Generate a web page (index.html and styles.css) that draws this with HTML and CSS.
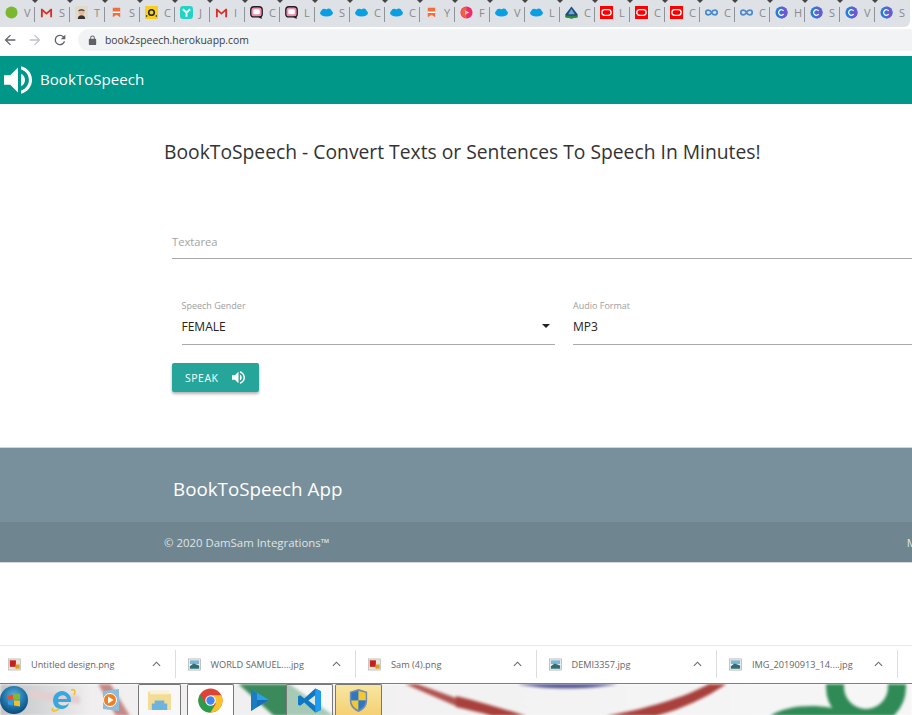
FILE: index.html
```html
<!DOCTYPE html>
<html lang="en">
<head>
    <meta charset="UTF-8">
    <meta name="viewport" content="width=device-width, initial-scale=1.0">
    <title>BookToSpeech</title>
    <link rel="stylesheet" href="styles.css">
</head>
<body>
<svg class="sprites" width="0" height="0">
    <defs><radialGradient id="orb-glow" cx=".5" cy=".35" r=".7"><stop offset="0" stop-color="#5fb4e0"/><stop offset=".6" stop-color="#1c6ea4"/><stop offset="1" stop-color="#0c3f68"/></radialGradient></defs>
    <symbol id="dot" viewBox="0 0 14 14"><circle cx="7" cy="7" r="6.500" fill="#7cb82f"/></symbol>
    <symbol id="gmail" viewBox="0 0 14 14"><path d="M1 12V3h1.500L7 7l4.500-4H13v9h-2V6L7 9.500 3 6v6z" fill="#d93025"/></symbol>
    <symbol id="face" viewBox="0 0 14 14"><rect width="14" height="14" fill="#e3d9c8"/><path d="M3 14c0-3 2-4 4-4s4 1 4 4z" fill="#333"/><circle cx="7" cy="6.500" r="3.200" fill="#e5b995"/><path d="M3.500 6C3.500 2.500 10.500 2.500 10.500 6 9 4.500 5 4.500 3.500 6z" fill="#222"/></symbol>
    <symbol id="mark" viewBox="0 0 14 14"><path d="M3 2h8v10L7 9.500 3 12z" fill="#ee6f3c"/><rect x="3" y="6" width="8" height="1.500" fill="#fff"/></symbol>
    <symbol id="zero" viewBox="0 0 14 14"><rect width="14" height="14" fill="#f7cf1e"/><circle cx="7" cy="7" r="3" fill="none" stroke="#222" stroke-width="1.600"/><rect x="1" y="10" width="1.500" height="1.500" fill="#222"/><rect x="11.500" y="10" width="1.500" height="1.500" fill="#222"/></symbol>
    <symbol id="teal" viewBox="0 0 14 14"><rect width="14" height="14" rx="3.500" fill="#22d3c5"/><path d="M3 3.500 7 7l4-3.500M7 7v4.500" fill="none" stroke="#fff" stroke-width="2"/></symbol>
    <symbol id="bubble" viewBox="0 0 14 14"><rect x=".8" y=".8" width="12.400" height="11" rx="3.500" fill="#ee8fad" stroke="#1e1e22" stroke-width="1.400"/><rect x="3.500" y="3.500" width="7" height="5.500" rx="1.500" fill="#fff"/><path d="M8.500 11.500 12.500 14v-3z" fill="#1e1e22"/></symbol>
    <symbol id="cloud" viewBox="0 0 14 14"><ellipse cx="7" cy="7.500" rx="7" ry="3.800" fill="#0a9fe3"/><circle cx="4.500" cy="6" r="3" fill="#0a9fe3"/><circle cx="9.500" cy="5.500" r="2.800" fill="#0a9fe3"/></symbol>
    <symbol id="play" viewBox="0 0 14 14"><circle cx="7" cy="7" r="6.500" fill="#ee2a6b"/><path d="M1 7a6 6 0 0 1 6-6v12a6 6 0 0 1-6-6z" fill="#f0613f"/><path d="M5.500 4.500 10 7l-4.500 2.500z" fill="#fbd"/></symbol>
    <symbol id="trail" viewBox="0 0 14 14"><path d="M7 .5 13.500 9v3L7 13.500.5 12V9z" fill="#1f4e79"/><path d="M7 3l3.500 6h-7z" fill="#6fa8dc"/><path d="M.5 10.500h13V12L7 13.500.5 12z" fill="#2e8b3d"/></symbol>
    <symbol id="oracle" viewBox="0 0 14 14"><rect width="14" height="14" fill="#f00"/><rect x="2" y="4" width="10" height="6" rx="3" fill="none" stroke="#fff" stroke-width="1.400"/></symbol>
    <symbol id="loop" viewBox="0 0 14 14"><path d="M7 7C5.500 3.500.8 3.800.8 7s4.700 3.500 6.200 0 6.200-3.200 6.200 0-4.700 3.500-6.200 0z" fill="none" stroke="#4a8bd0" stroke-width="2"/></symbol>
    <symbol id="coin" viewBox="0 0 14 14"><circle cx="7" cy="7" r="6.500" fill="#2f7ad8"/><path d="M7 .5a6.500 6.500 0 0 1 0 13z" fill="#6a5bd0"/><path d="M9.300 5.200a3 3 0 1 0 0 3.600" fill="none" stroke="#fff" stroke-width="1.300"/></symbol>
    <symbol id="sound" viewBox="3 3 18 18"><path d="M3 9v6h4l5 5V4L7 9H3zm13.500 3c0-1.770-1.020-3.290-2.500-4.030v8.050c1.480-.73 2.500-2.250 2.500-4.020zM14 3.230v2.060c2.890.86 5 3.540 5 6.710s-2.110 5.850-5 6.710v2.060c4.010-.91 7-4.490 7-8.770s-2.990-7.860-7-8.770z" fill="currentColor"/></symbol>
    <symbol id="chev" viewBox="0 0 10 6"><path d="M1 5l4-4 4 4" fill="none" stroke="#666" stroke-width="1.200"/></symbol>
    <symbol id="pngfile" viewBox="0 0 14 14"><rect x=".5" y="1" width="13" height="12" fill="#e8e2d8" stroke="#aaa" stroke-width=".6"/><rect x="2" y="2.500" width="6.500" height="7" fill="#c4201c"/><rect x="8" y="7" width="4.500" height="4.500" fill="#d9a020"/></symbol>
    <symbol id="jpgfile" viewBox="0 0 14 14"><rect x=".5" y="1" width="13" height="12" fill="#eef1f3" stroke="#999" stroke-width=".6"/><rect x="2" y="2.500" width="10" height="4" fill="#7fb6d8"/><path d="M2 9l4-3 6 2v3.500H2z" fill="#2f6f73"/></symbol>
</svg>

<div class="tabstrip">
    <div class="tab"><svg class="fav"><use href="#dot"/></svg><span>V</span></div>
    <div class="tab"><svg class="fav"><use href="#gmail"/></svg><span>S</span></div>
    <div class="tab"><svg class="fav"><use href="#face"/></svg><span>T</span></div>
    <div class="tab"><svg class="fav"><use href="#mark"/></svg><span>S</span></div>
    <div class="tab"><svg class="fav"><use href="#zero"/></svg><span>C</span></div>
    <div class="tab"><svg class="fav"><use href="#teal"/></svg><span>J</span></div>
    <div class="tab"><svg class="fav"><use href="#gmail"/></svg><span>I</span></div>
    <div class="tab"><svg class="fav"><use href="#bubble"/></svg><span>C</span></div>
    <div class="tab"><svg class="fav"><use href="#bubble"/></svg><span>L</span></div>
    <div class="tab"><svg class="fav"><use href="#cloud"/></svg><span>S</span></div>
    <div class="tab"><svg class="fav"><use href="#cloud"/></svg><span>C</span></div>
    <div class="tab"><svg class="fav"><use href="#cloud"/></svg><span>C</span></div>
    <div class="tab"><svg class="fav"><use href="#mark"/></svg><span>Y</span></div>
    <div class="tab"><svg class="fav"><use href="#play"/></svg><span>F</span></div>
    <div class="tab"><svg class="fav"><use href="#cloud"/></svg><span>V</span></div>
    <div class="tab"><svg class="fav"><use href="#cloud"/></svg><span>L</span></div>
    <div class="tab"><svg class="fav"><use href="#trail"/></svg><span>C</span></div>
    <div class="tab"><svg class="fav"><use href="#oracle"/></svg><span>L</span></div>
    <div class="tab"><svg class="fav"><use href="#oracle"/></svg><span>C</span></div>
    <div class="tab"><svg class="fav"><use href="#oracle"/></svg><span>C</span></div>
    <div class="tab"><svg class="fav"><use href="#loop"/></svg><span>C</span></div>
    <div class="tab"><svg class="fav"><use href="#loop"/></svg><span>C</span></div>
    <div class="tab"><svg class="fav"><use href="#coin"/></svg><span>H</span></div>
    <div class="tab"><svg class="fav"><use href="#coin"/></svg><span>S</span></div>
    <div class="tab"><svg class="fav"><use href="#coin"/></svg><span>V</span></div>
    <div class="tab"><svg class="fav"><use href="#coin"/></svg><span>S</span></div>
</div>

<div class="toolbar">
    <svg class="nav-icon" viewBox="0 0 24 24"><path d="M20 11H7.800l5.600-5.600L12 4l-8 8 8 8 1.400-1.400L7.800 13H20z" fill="#5f6368"/></svg>
    <svg class="nav-icon" viewBox="0 0 24 24"><path d="M4 11h12.200l-5.600-5.600L12 4l8 8-8 8-1.400-1.400 5.600-5.600H4z" fill="#bdc1c6"/></svg>
    <svg class="nav-icon" viewBox="0 0 24 24"><path d="M17.650 6.350A7.960 7.960 0 0 0 12 4a8 8 0 1 0 7.730 10h-2.080A6 6 0 1 1 12 6c1.660 0 3.140.69 4.220 1.780L13 11h7V4z" fill="#5f6368"/></svg>
    <div class="omnibox">
        <svg class="lock" viewBox="0 0 24 24"><path d="M18 8h-1V6A5 5 0 0 0 7 6v2H6a2 2 0 0 0-2 2v10c0 1.100.9 2 2 2h12a2 2 0 0 0 2-2V10a2 2 0 0 0-2-2zM9 6a3 3 0 0 1 6 0v2H9z" fill="#5f6368"/></svg>
        <span>book2speech.herokuapp.com</span>
    </div>
</div>

<header class="navbar">
    <svg class="brand-icon"><use href="#sound"/></svg>
    <span class="brand">BookToSpeech</span>
</header>

<main class="content">
    <h1 class="title">BookToSpeech - Convert Texts or Sentences To Speech In Minutes!</h1>
    <form class="speech-form">
        <div class="textarea-field">Textarea</div>
        <div class="select-row">
            <div class="select-field gender">
                <label>Speech Gender</label>
                <div class="select-value">FEMALE<i class="caret"></i></div>
            </div>
            <div class="select-field format">
                <label>Audio Format</label>
                <div class="select-value">MP3</div>
            </div>
        </div>
        <button type="button" class="speak">SPEAK<svg class="speak-icon"><use href="#sound"/></svg></button>
    </form>
</main>

<footer class="footer">
    <div class="footer-main"><h2>BookToSpeech App</h2></div>
    <div class="footer-copy">
        <div class="footer-copy-inner">
            <span>© 2020 DamSam Integrations™</span>
            <span>M</span>
        </div>
    </div>
</footer>

<div class="blank"></div>

<div class="downloads">
    <div class="download"><svg class="file"><use href="#pngfile"/></svg><span class="file-name">Untitled design.png</span><svg class="chev"><use href="#chev"/></svg></div>
    <div class="download"><svg class="file"><use href="#jpgfile"/></svg><span class="file-name">WORLD SAMUEL....jpg</span><svg class="chev"><use href="#chev"/></svg></div>
    <div class="download"><svg class="file"><use href="#pngfile"/></svg><span class="file-name">Sam (4).png</span><svg class="chev"><use href="#chev"/></svg></div>
    <div class="download"><svg class="file"><use href="#jpgfile"/></svg><span class="file-name">DEMI3357.jpg</span><svg class="chev"><use href="#chev"/></svg></div>
    <div class="download"><svg class="file"><use href="#jpgfile"/></svg><span class="file-name">IMG_20190913_14....jpg</span><svg class="chev"><use href="#chev"/></svg></div>
</div>

<div class="taskbar">
    <svg class="wallpaper" viewBox="0 0 912 32" preserveAspectRatio="none">
        <defs><linearGradient id="wall" x1="0" x2="1" y1="0" y2="0"><stop offset="0" stop-color="#bfc3c6"/><stop offset=".1" stop-color="#f0eeee"/><stop offset="1" stop-color="#f6f6f6"/></linearGradient></defs>
        <rect width="912" height="32" fill="url(#wall)"/>
        <path d="M30 6 80 12 80 20 30 14z" fill="#e3cfcf"/>
        <path d="M96 -4h12l22 36h-14z" fill="#c58a88"/>
        <path d="M234 -4h50l50 36h-60z" fill="#3b8a5c"/>
        <path d="M396 -4h10l50 18v8z" fill="#b0524e"/>
        <path d="M456 12C480 18 505 25 526 32H492C480 28 468 26 456 23z" fill="#a8403c"/>
        <path d="M513 -4h109v3c-30 7-80 7-109 0z" fill="#494b8c"/>
        <path d="M606 32C650 24 690 12 716 -4H732C710 12 685 24 656 32z" fill="#a8403c"/>
        <path d="M770 32C785 22 810 20 832 24L842 32z" fill="#2f8a55"/>
        <circle cx="866" cy="3" r="31" fill="none" stroke="#2f8a55" stroke-width="18"/>
    </svg>
    <svg class="orb" viewBox="0 0 28 28">
        <circle cx="14" cy="14" r="14" fill="url(#orb-glow)"/>
        <path d="M8 10l5-1.500V13.500H8z" fill="#e8502a"/><path d="M14 8.200 20 7.500V13.500h-6z" fill="#7db93a"/>
        <path d="M8 14.500h5V19.500l-5-1z" fill="#2f9be0"/><path d="M14 14.500h6V20.500l-6-1z" fill="#f4c020"/>
    </svg>
    <svg class="ie" viewBox="0 0 26 26">
        <path d="M3 13a9 9 0 0 1 17-4c1 2 1 4 1 6H8c.5 4 7 5 11 1-1 4-4 6-8 6-5 0-8-4-8-9zm5-1h9c-.5-5-8-5-9 0z" fill="#36a7e0"/>
        <path d="M3 21C1 24 4 25 9 22M21 3c3-1 5 0 3 5" fill="none" stroke="#f1c232" stroke-width="1.800"/>
    </svg>
    <svg class="media" viewBox="0 0 22 24">
        <path d="M3 3l16-2v22L3 21z" fill="#8fbcd8"/><circle cx="10" cy="12" r="6.500" fill="#f0801f" stroke="#fff"/><path d="M8 8.500l5.500 3.500L8 15.500z" fill="#fff"/>
    </svg>
    <div class="task-tile explorer">
        <svg viewBox="0 0 26 24"><path d="M1 3h9l2 2h13v17H1z" fill="#f3dc96"/><rect x="3" y="1.500" width="20" height="4" fill="#f8f1d6"/><path d="M8 12h10v3h3v7H5v-7h3z" fill="#6fb2dc"/></svg>
    </div>
    <div class="task-tile chrome">
        <svg viewBox="0 0 24 24">
            <circle cx="12" cy="12" r="11.500" fill="#dc4437"/>
            <path d="M12 23.500A11.500 11.500 0 0 1 2 6l5 9 5 .5 4 1.500z" fill="#2a9d4a"/>
            <path d="M12 7h10.500a11.500 11.500 0 0 1-10.500 16.500L17 15z" fill="#fbc02d"/>
            <circle cx="12" cy="12" r="5" fill="#fff"/><circle cx="12" cy="12" r="4" fill="#4285f4"/>
        </svg>
    </div>
    <svg class="player" viewBox="0 0 22 24"><path d="M2 1l18 11L2 23z" fill="#2aa0e8"/><path d="M2 1l6 4v14l-6 4z" fill="#1b7cc0"/><path d="M8 12l12 0L8 19z" fill="#186fb5"/></svg>
    <div class="task-tile vscode">
        <svg viewBox="0 0 24 24"><path d="M17.500 .5 23 3v18l-5.500 2.500L7 14l-4 3-2-1V8l2-1 4 3z" fill="#0d78c4"/><path d="M17.500 7 11 12l6.500 5z" fill="#dfe9e4"/><path d="M17.500 .5 23 3v18l-5.500 2.500z" fill="#1f9cf0"/></svg>
    </div>
    <div class="task-tile shield">
        <svg viewBox="0 0 22 26"><path d="M11 1l9 3v9c0 6-4 10-9 12-5-2-9-6-9-12V4z" fill="#6f8db0"/><path d="M11 3v10H3.500V5z" fill="#2f76c4"/><path d="M11 3l7.500 2v8H11z" fill="#f4c92f"/><path d="M3.500 13H11v10c-4-2-7-5-7.500-10z" fill="#f4c92f"/><path d="M11 13h7.500c-.5 5-3.500 8-7.500 10z" fill="#2f76c4"/></svg>
    </div>
</div>
</body>
</html>
```

FILE: styles.css
```css
* {
    box-sizing: border-box;
}
html, body {
    height: 100%;
}
body {
    margin: 0;
    width: 912px;
    height: 715px;
    overflow: hidden;
    display: flex;
    flex-direction: column;
    background: #fff;
    color: #222;
    font-family: "Open Sans", "Noto Sans", Arial, sans-serif;
}
.sprites {
    position: absolute;
}

/* browser chrome */
.tabstrip {
    display: flex;
    flex: none;
    width: 910px;
    height: 27px;
    background: #dee1e6;
    border-bottom-right-radius: 6px;
}
.tab {
    position: relative;
    flex: none;
    width: 35px;
    height: 27px;
    padding: 6px 0 0 5px;
    display: flex;
    gap: 6px;
    align-items: flex-start;
    font-size: 11px;
    line-height: 14px;
    color: #8a8a8a;
}
.tab::before {
    content: "";
    position: absolute;
    right: 0;
    top: 7px;
    height: 15px;
    border-right: 1px solid #8f9296;
}
.tab::after {
    content: "";
    position: absolute;
    right: -3px;
    top: 0;
    border: 3px solid transparent;
    border-top: 3px solid #444;
}
.tab:last-child::before, .tab:last-child::after {
    display: none;
}
.fav {
    width: 13px;
    height: 13px;
    flex: none;
}
.toolbar {
    display: flex;
    flex: none;
    align-items: center;
    height: 29px;
    padding: 0 0 3px 2px;
    gap: 9px;
    background: #fff;
}
.nav-icon {
    width: 16px;
    height: 16px;
    flex: none;
}
.omnibox {
    flex: 1;
    display: flex;
    align-items: center;
    height: 22px;
    margin-left: 1px;
    margin-right: -20px;
    padding-left: 9px;
    gap: 7px;
    background: #f1f3f4;
    border-radius: 11px;
    font-size: 10.400px;
    color: #3c3c3c;
}
.lock {
    width: 11px;
    height: 11px;
}

/* app */
.navbar {
    flex: none;
    display: flex;
    align-items: center;
    height: 48px;
    padding-left: 4px;
    gap: 8px;
    background: #009688;
    color: #fff;
}
.brand-icon {
    width: 28px;
    height: 28px;
}
.brand {
    font-size: 15.100px;
    padding-bottom: 3px;
}
.content {
    flex: none;
    height: 343px;
    padding: 36px 0 0 164px;
    overflow: hidden;
}
.title {
    margin: 0;
    font-size: 19.300px;
    font-weight: 400;
    line-height: 24px;
    white-space: nowrap;
    color: #333;
}
.speech-form {
    width: 800px;
    margin: 67px 0 0 8px;
}
.textarea-field {
    height: 28px;
    padding-top: 3px;
    border-bottom: 1px solid #a9a9a9;
    font-size: 11.200px;
    color: #a3a3a3;
}
.select-row {
    display: flex;
    gap: 18px;
    padding-left: 9.500px;
    margin-top: 40px;
}
.select-field label {
    display: block;
    font-size: 9px;
    line-height: 14px;
    color: #9e9e9e;
}
.gender {
    width: 373.500px;
    flex: none;
}
.format {
    flex: 1;
}
.select-value {
    position: relative;
    height: 32px;
    padding-top: 5px;
    border-bottom: 1px solid #a9a9a9;
    font-size: 12px;
    line-height: 17px;
    color: #222;
}
.caret {
    position: absolute;
    right: 5px;
    top: 11px;
    border: 4px solid transparent;
    border-top: 4px solid #222;
}
.speak {
    display: flex;
    align-items: center;
    gap: 14px;
    width: 87px;
    height: 29px;
    margin-top: 18px;
    padding: 0 0 0 13px;
    border: none;
    border-radius: 2px;
    background: #26a69a;
    color: #fff;
    font-family: inherit;
    font-size: 10.500px;
    letter-spacing: .5px;
    box-shadow: 0 2px 3px rgba(0, 0, 0, .3);
}
.speak-icon {
    width: 13px;
    height: 13px;
}
.footer {
    flex: none;
    height: 116px;
    background: #78909c;
    border-top: 1px solid #d5d5d5;
    border-bottom: 1px solid #d5d5d5;
    color: #fff;
}
.footer-main {
    height: 74px;
    padding: 28px 0 0 173px;
}
.footer-main h2 {
    margin: 0;
    font-size: 18.800px;
    font-weight: 400;
    line-height: 26px;
}
.footer-copy {
    height: 40px;
    background: #6f858f;
    padding-left: 164px;
    font-size: 11.400px;
    line-height: 42px;
    color: #dfe5e8;
}
.footer-copy-inner {
    display: flex;
    justify-content: space-between;
    width: 753px;
}
.blank {
    flex: none;
    height: 82px;
}

/* downloads shelf */
.downloads {
    flex: none;
    display: flex;
    height: 39px;
    border-top: 1px solid #e8e8e8;
    border-bottom: 1px solid #7e7e7e;
    background: #fff;
}
.download {
    flex: none;
    width: 180.500px;
    height: 28px;
    margin-top: 4px;
    display: flex;
    align-items: center;
    padding-left: 8px;
    border-right: 1px solid #ddd;
    position: relative;
}
.download:first-child {
    width: 175.500px;
}
.download + .download {
    padding-left: 12px;
}
.file {
    width: 13px;
    height: 13px;
    flex: none;
}
.file-name {
    margin-left: 10px;
    font-size: 9.200px;
    color: #666;
    white-space: nowrap;
}
.chev {
    position: absolute;
    right: 14px;
    top: 11px;
    width: 9px;
    height: 6px;
}

/* windows taskbar */
.taskbar {
    position: relative;
    flex: none;
    height: 32px;
    display: flex;
    align-items: center;
    overflow: hidden;
}
.wallpaper {
    position: absolute;
    left: 0;
    top: 0;
    width: 912px;
    height: 32px;
    filter: blur(1.500px);
}
.orb, .ie, .media, .player, .task-tile {
    position: relative;
    flex: none;
}
.orb {
    width: 28px;
    height: 28px;
}
.ie {
    width: 26px;
    height: 26px;
    margin-left: 22px;
}
.media {
    width: 22px;
    height: 24px;
    margin-left: 24px;
}
.task-tile {
    height: 32px;
    display: flex;
    align-items: center;
    justify-content: center;
    background: rgba(255, 255, 255, .55);
    border: 1px solid #777;
    border-bottom: none;
    border-radius: 2px 2px 0 0;
}
.task-tile svg {
    width: 25px;
    height: 25px;
}
.explorer {
    width: 43px;
    margin-left: 16px;
}
.chrome {
    width: 47px;
    margin-left: 6px;
    background: rgba(255, 255, 255, .9);
}
.player {
    width: 22px;
    height: 24px;
    margin-left: 15px;
}
.vscode {
    width: 47px;
    margin-left: 15px;
}
.shield {
    width: 47px;
    margin-left: 2px;
    background: linear-gradient(#f8e6a0, #f5cf74);
}
```
